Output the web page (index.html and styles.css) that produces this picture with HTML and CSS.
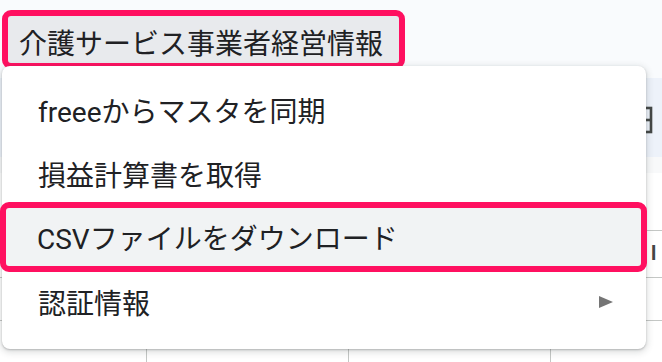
FILE: index.html
```html
<!DOCTYPE html>
<html lang="ja">
<head>
    <meta charset="UTF-8">
    <meta name="viewport" content="width=device-width, initial-scale=1.0">
    <title>介護サービス事業者経営情報</title>
    <link rel="stylesheet" href="styles.css">
</head>
<body>
    <div class="sheet">
        <!-- Menu bar with the custom menu -->
        <div class="menubar">
            <span class="menu-title">介護サービス事業者経営情報</span>
        </div>

        <!-- Toolbar (mostly covered by the dropdown) -->
        <div class="toolbar">
            <svg class="toolbar-icon" width="28" height="28" viewBox="0 0 28 28">
                <rect x="2" y="2" width="22" height="24" fill="none" stroke="#444746" stroke-width="2.6"/>
                <line x1="2" y1="14" x2="24" y2="14" stroke="#444746" stroke-width="2.6"/>
                <line x1="13" y1="2" x2="13" y2="26" stroke="#444746" stroke-width="2.6"/>
            </svg>
        </div>
        <div class="formula-bar"></div>

        <!-- Spreadsheet grid behind the menu -->
        <div class="grid">
            <div class="row row-first">
                <div class="cell col-a"></div>
                <div class="cell"></div>
                <div class="cell"></div>
                <div class="cell"></div>
            </div>
            <div class="row row-second">
                <div class="cell col-a"></div>
                <div class="cell"></div>
                <div class="cell"></div>
                <div class="cell cell-text">l</div>
            </div>
            <div class="row row-third">
                <div class="cell col-a"></div>
                <div class="cell"></div>
                <div class="cell"></div>
                <div class="cell"></div>
            </div>
            <div class="row row-last">
                <div class="cell col-a"></div>
                <div class="cell"></div>
                <div class="cell"></div>
                <div class="cell"></div>
            </div>
        </div>

        <!-- Dropdown of the custom menu -->
        <div class="dropdown">
            <div class="menu-item">freeeからマスタを同期</div>
            <div class="menu-item">損益計算書を取得</div>
            <div class="menu-item is-active">CSVファイルをダウンロード</div>
            <div class="menu-item">
                <span>認証情報</span>
                <span class="submenu-arrow"></span>
            </div>
        </div>
    </div>
</body>
</html>
```

FILE: styles.css
```css
/* General styling */
body {
    margin: 0;
    background-color: #f9fbfd;
    font-family: Roboto, "Noto Sans CJK JP", sans-serif;
    color: #202124;
}

.sheet {
    position: relative;
    width: 662px;
    height: 362px;
    overflow: hidden;
}

/* Menu bar */
.menubar {
    height: 78px;
    padding: 10px 0 0 2px;
    box-sizing: border-box;
}

.menu-title {
    display: inline-flex;
    align-items: center;
    height: 59px;
    box-sizing: border-box;
    padding: 4px 16px 0 11px;
    border: 6px solid #ff1060;
    border-radius: 9px;
    background-color: #e8eaed;
    font-size: 28px;
    color: #202124;
}

/* Toolbar */
.toolbar {
    height: 79px;
    display: flex;
    align-items: center;
    justify-content: flex-end;
    padding: 5px 7px 0 0;
    box-sizing: border-box;
    background-color: #edf2fa;
}

.formula-bar {
    height: 16px;
    background-color: #f8f9fa;
}

/* Grid */
.grid {
    background-color: #fff;
}

.row {
    display: flex;
    border-bottom: 1.5px solid #c4c7c5;
    box-sizing: border-box;
}

.row-first {
    height: 58px;
}

.row-second {
    height: 47px;
}

.row-third {
    height: 43px;
}

.row-last {
    height: 41px;
    border-bottom: none;
}

.cell {
    width: 202px;
    flex-shrink: 0;
    border-right: 1.5px solid #c4c7c5;
    box-sizing: border-box;
}

.col-a {
    width: 147px;
}

.cell-text {
    padding: 10px 0 0 100px;
    font-size: 20px;
    font-weight: bold;
    color: #444746;
}

/* Dropdown */
.dropdown {
    position: absolute;
    left: 2px;
    top: 66px;
    width: 644px;
    padding: 12px 0 15px;
    box-sizing: border-box;
    background-color: #fff;
    border-radius: 8px;
    box-shadow: 0 2px 6px 2px rgba(60, 64, 67, 0.15), 0 1px 2px rgba(60, 64, 67, 0.3);
}

.menu-item {
    display: flex;
    align-items: center;
    justify-content: space-between;
    height: 64px;
    padding: 0 33px 0 36px;
    box-sizing: border-box;
    font-size: 28px;
    color: #202124;
}

.menu-item.is-active {
    height: 70px;
    margin: -4px -1px -2px -2px;
    padding-left: 31px;
    border: 6px solid #ff1060;
    border-radius: 9px;
    background-color: #f1f3f4;
}

.submenu-arrow {
    width: 0;
    height: 0;
    border-left: 14px solid #757575;
    border-top: 6.5px solid transparent;
    border-bottom: 6.5px solid transparent;
}
```
